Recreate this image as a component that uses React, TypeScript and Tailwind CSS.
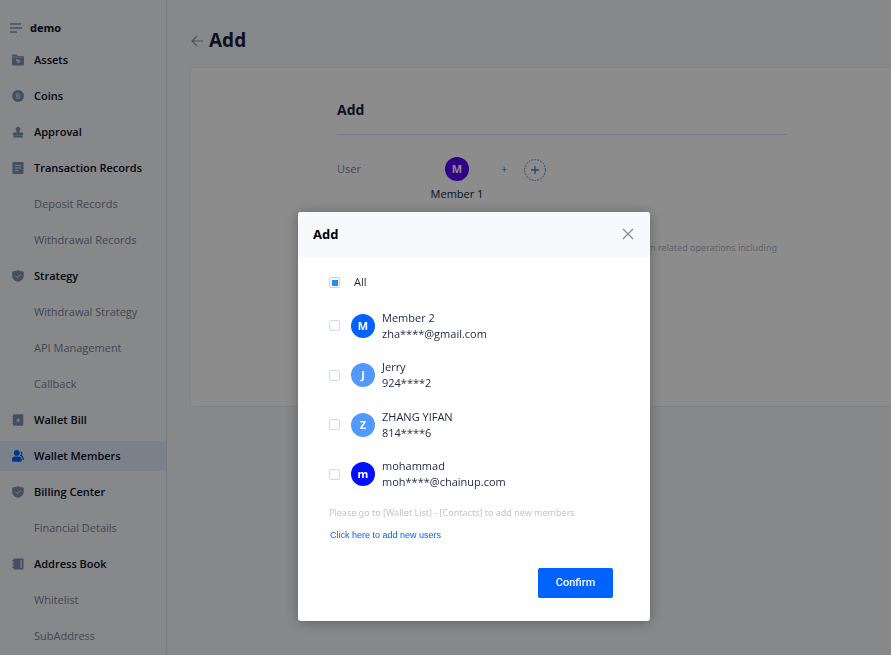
import type { ReactNode } from 'react';

const FONT = "font-['Open_Sans','Noto_Sans',sans-serif]";

type IconName = 'assets' | 'coins' | 'approval' | 'records' | 'shield' | 'bill' | 'members' | 'book';

const drawings: Record<IconName, ReactNode> = {
  assets: (
    <>
      <path fill="currentColor" d="M0 1.200C0 .8.300.500.700.500h3.700L5.800 2H11.300c.4 0 .7.300.7.700v7.800c0 .5-.4.900-.9.900H.9c-.5 0-.9-.4-.9-.9z" />
      <path d="M0 3.100h12" stroke="#f6f8fa" strokeOpacity=".45" strokeWidth=".8" />
      <path fill="#d5dde8" d="M4 5h1.500l.5.800 1.500-.3c.6.4.7 1 .5 1.700l-.5 1.500-2.400.2-.5-1.900L4 6.400z" />
    </>
  ),
  coins: (
    <>
      <circle cx="6" cy="6" r="6" fill="currentColor" />
      <path d="M4.800 3.600h1.600a1.100 1.100 0 0 1 0 2.300H4.800zm0 2.300h1.800a1.200 1.200 0 0 1 0 2.500H4.800z" fill="none" stroke="#d5dde8" strokeWidth=".9" />
    </>
  ),
  approval: (
    <path fill="currentColor" d="M6 .8a2.500 2.500 0 0 1 1.600 4.400c-.4.4-.5.9-.3 1.400H10c.8 0 1.300.6 1.300 1.300v1H.7v-1c0-.7.5-1.300 1.300-1.300h2.700c.2-.5.1-1-.3-1.400A2.500 2.500 0 0 1 6 .8zM1.400 9.200h9.200v2.200H1.400z" />
  ),
  records: (
    <>
      <rect x=".5" width="11" height="12" rx="1.200" fill="currentColor" />
      <path d="M3 3.300h6M3 6h6M3 8.700h3.600" stroke="#e4e9f0" strokeWidth="1" />
    </>
  ),
  shield: (
    <>
      <path fill="currentColor" d="M6 0c1.700 1 3.500 1.400 5.700 1.500v4.600c0 3-2.300 5-5.700 5.900C2.600 11.100.3 9.100.3 6.100V1.500C2.500 1.400 4.300 1 6 0z" />
      <path d="M3.500 5.900l1.900 1.900 3.400-3.400" fill="none" stroke="#e4e9f0" strokeWidth="1" />
    </>
  ),
  bill: (
    <>
      <rect x="1" y=".3" width="10.300" height="11.400" rx="1" fill="currentColor" />
      <path d="M.3 2.500h2M.3 4.800h2M.3 7.200h2M.3 9.500h2" stroke="currentColor" strokeWidth=".8" />
      <path d="M6.200 3.800l.7 1.400 1.500.2-1.100 1 .3 1.600-1.400-.8-1.400.8.3-1.600-1.100-1 1.500-.2z" fill="#e4e9f0" />
    </>
  ),
  members: (
    <>
      <circle cx="4.800" cy="2.900" r="2.900" fill="currentColor" />
      <path fill="currentColor" d="M3 6.400h3.700c1.900 0 3 1.200 3 3v1.200c0 .8-.5 1.200-1.200 1.200H1.200C.5 11.800 0 11.400 0 10.600V9.400c0-1.800 1.100-3 3-3z" />
      <path fill="none" stroke="currentColor" strokeWidth="1.200" d="M8.600 1.800c1.600.5 1.700 2.800.2 3.700 1.800.6 2.600 2 2.500 4.500" />
    </>
  ),
  book: (
    <>
      <rect x="1.500" y=".5" width="10" height="11" rx=".8" fill="currentColor" />
      <path d="M0 2.900h2.500M0 6h2.500M0 9.100h2.500" stroke="currentColor" strokeWidth="1" />
      <path d="M9.200 2v8" stroke="#e4e9f0" strokeWidth="1.200" />
    </>
  ),
};

function NavIcon({ name }: { name: IconName }) {
  return (
    <svg viewBox="0 0 12 12" className="size-3 shrink-0" aria-hidden="true">
      {drawings[name]}
    </svg>
  );
}

type NavItem = { label: string; icon?: IconName; active?: boolean };

const navItems: NavItem[] = [
  { label: 'Assets', icon: 'assets' },
  { label: 'Coins', icon: 'coins' },
  { label: 'Approval', icon: 'approval' },
  { label: 'Transaction Records', icon: 'records' },
  { label: 'Deposit Records' },
  { label: 'Withdrawal Records' },
  { label: 'Strategy', icon: 'shield' },
  { label: 'Withdrawal Strategy' },
  { label: 'API Management' },
  { label: 'Callback' },
  { label: 'Wallet Bill', icon: 'bill' },
  { label: 'Wallet Members', icon: 'members', active: true },
  { label: 'Billing Center', icon: 'shield' },
  { label: 'Financial Details' },
  { label: 'Address Book', icon: 'book' },
  { label: 'Whitelist' },
  { label: 'SubAddress' },
];

const members = [
  { name: 'Member 2', account: 'zha****@gmail.com', letter: 'M', color: 'bg-[#0062ff]' },
  { name: 'Jerry', account: '924****2', letter: 'J', color: 'bg-[#5199ff]' },
  { name: 'ZHANG YIFAN', account: '814****6', letter: 'Z', color: 'bg-[#5199ff]' },
  { name: 'mohammad', account: 'moh****@chainup.com', letter: 'm', color: 'bg-[#0010ff]' },
];

function Sidebar() {
  return (
    <aside className="w-[167px] shrink-0 border-r border-[#d8dcea] pt-[13px]">
      <div className="flex h-[30px] items-center gap-2 pl-[10px]">
        <svg viewBox="0 0 12 10" className="h-[10px] w-3" aria-hidden="true">
          <path d="M0 1h11M0 5h12M0 9h7" stroke="#7d92b3" strokeWidth="1.300" />
        </svg>
        <span className="text-[11px] font-bold text-[#050d28]">demo</span>
      </div>
      <nav className="mt-[2px] flex flex-col gap-[6px]">
        {navItems.map((item) => (
          <a
            key={item.label}
            href="#"
            className={`flex h-[30px] items-center text-[11px] whitespace-nowrap ${
              item.icon ? 'gap-[10px] pl-3 font-semibold' : 'pl-[34px]'
            } ${item.active ? 'bg-[#deebfd] text-[#0062ff]' : 'text-[#7d92b3]'}`}
          >
            {item.icon && <NavIcon name={item.icon} />}
            <span className={item.icon ? 'text-[#050d28]' : 'text-[#7c8593]'}>{item.label}</span>
          </a>
        ))}
      </nav>
    </aside>
  );
}

function Avatar({ letter, color }: { letter: string; color: string }) {
  return (
    <span className={`flex size-6 shrink-0 items-center justify-center rounded-full text-[11px] font-bold text-white ${color}`}>
      {letter}
    </span>
  );
}

function Page() {
  return (
    <main className="min-w-0 flex-1 pl-[23px]">
      <div className="flex h-[67px] items-center gap-[6px] pt-[14px] pl-px">
        <button type="button" aria-label="Back">
          <svg viewBox="0 0 12 12" className="size-3" fill="none" stroke="#8195b5" strokeWidth="1.100" aria-hidden="true">
            <path d="M6 1L1 6l5 5M1 6h11" />
          </svg>
        </button>
        <h1 className="text-[19px] font-bold text-[#15203d]">Add</h1>
      </div>
      <section className="h-[340px] rounded-l border border-r-0 border-[#e9edf2] bg-white pt-[30px] pl-[146px]">
        <div className="max-w-[450px]">
          <h2 className="border-b border-[#d4dded] pb-3 text-sm leading-6 font-bold text-[#15203d]">Add</h2>
          <div className="mt-[22px] flex text-[11px]">
            <span className="w-[94px] leading-6 text-[#7c8593]">User</span>
            <div className="flex w-[52px] flex-col items-center gap-[5px]">
              <Avatar letter="M" color="bg-[#5b00f5]" />
              <span className="leading-4 whitespace-nowrap text-[#15203d]">Member 1</span>
            </div>
            <span className="ml-[18px] leading-6 text-[#5a7aa8]">+</span>
            <button type="button" aria-label="Add member" className="mt-[2px] ml-[17px] size-[22px]">
              <svg viewBox="0 0 22 22" className="size-[22px]" fill="none" stroke="#3c7fe0" aria-hidden="true">
                <circle cx="11" cy="11" r="10.400" strokeDasharray="1.800 1.200" />
                <path d="M11 7v8M7 11h8" strokeWidth="1.300" />
              </svg>
            </button>
          </div>
          <p className="mt-9 pr-[10px] text-right font-['Noto_Sans',sans-serif] text-[9px] leading-5 text-[#b0b7c1]">
            perform related operations including
          </p>
        </div>
      </section>
    </main>
  );
}

function AddDialog() {
  return (
    <div className="fixed inset-0 flex items-start justify-center bg-black/45 pt-[212px] pl-[57px]">
      <div role="dialog" aria-labelledby="dialog-title" className="w-[352px] rounded-[3px] bg-white shadow-[0_1px_14px_rgba(0,0,0,0.3)]">
        <header className="flex h-[45px] items-center justify-between rounded-t-[3px] bg-[#f7f9fc] pr-4 pl-[15px]">
          <h2 id="dialog-title" className="text-[13px] font-bold text-black">Add</h2>
          <button type="button" aria-label="Close" className="pb-[2px]">
            <svg viewBox="0 0 12 12" className="size-3" stroke="#8c8c8c" strokeWidth="1.300" aria-hidden="true">
              <path d="M1 1l10 10M11 1L1 11" />
            </svg>
          </button>
        </header>
        <div className="px-[31px] pt-[15px] pb-[23px] text-[11px] text-[#1c2741]">
          <label className="flex h-5 items-center gap-[14px]">
            <input
              type="checkbox"
              className="size-[11px] appearance-none rounded-[2px] border border-[#d0d0d0] bg-[#1890ff] bg-clip-content pt-[2px] pr-px pb-px pl-[2px]"
            />
            <span>All</span>
          </label>
          <div className="mt-[9px] grid h-[198px] grid-rows-4">
            {members.map((m) => (
              <label key={m.name} className="flex items-center">
                <input type="checkbox" className="size-[11px] appearance-none rounded-[2px] border border-[#d4dbe8] bg-white" />
                <span className="ml-[11px]">
                  <Avatar letter={m.letter} color={m.color} />
                </span>
                <span className="ml-[7px] flex flex-col leading-4">
                  <span>{m.name}</span>
                  <span>{m.account}</span>
                </span>
              </label>
            ))}
          </div>
          <p className="mt-1 font-['Noto_Sans',sans-serif] text-[9px] leading-5 text-[#c0c5cc]">
            Please go to [Wallet List] - [Contacts] to add new members
          </p>
          <a href="#" className="ml-px block font-['Liberation_Sans',Arial,sans-serif] text-[9px] leading-6 text-[#0062ff]">
            Click here to add new users
          </a>
          <div className="mt-[21px] flex justify-end pr-[6px]">
            <button
              type="button"
              className="h-[30px] w-[75px] rounded-[2px] bg-[#0062ff] font-[Roboto,Arial,sans-serif] text-[11px] font-medium text-white"
            >
              Confirm
            </button>
          </div>
        </div>
      </div>
    </div>
  );
}

export default function App() {
  return (
    <div className={`flex h-screen overflow-hidden bg-[#f5f7fa] ${FONT}`}>
      <Sidebar />
      <Page />
      <AddDialog />
    </div>
  );
}
